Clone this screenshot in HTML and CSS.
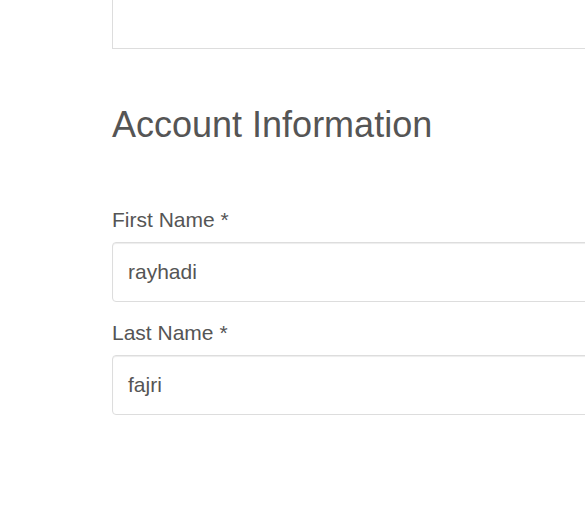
FILE: index.html
```html
<!DOCTYPE html>
<html>
<head>
<meta charset="utf-8">
<link rel="stylesheet" href="styles.css">
</head>
<body>
<div class="page">
  <div class="top-box"></div>
  <h2 class="title">Account Information</h2>
  <div class="field">
    <label class="label">First Name *</label>
    <div class="input">rayhadi</div>
  </div>
  <div class="field">
    <label class="label">Last Name *</label>
    <div class="input">fajri</div>
  </div>
</div>
</body>
</html>
```
FILE: styles.css
```css
html, body {
  margin: 0;
  padding: 0;
  background: #fff;
}
body {
  font-family: "Liberation Sans", Arial, sans-serif;
  color: #555;
  overflow: hidden;
}
.page {
  padding-left: 112px;
  overflow: hidden;
}
.top-box,
.input {
  margin-right: -10px;
}
.top-box {
  height: 48px;
  border: 1px solid #ddd;
  border-top: none;
}
.title {
  margin: 56px 0 0;
  font-size: 36px;
  line-height: 39.6px;
  font-weight: 400;
  color: #555;
}
.field {
  display: flex;
  flex-direction: column;
}
.title + .field {
  margin-top: 61px;
}
.field + .field {
  margin-top: 17px;
}
.label {
  font-size: 21px;
  line-height: 28px;
  margin-bottom: 8px;
}
.input {
  height: 58px;
  border: 1px solid #ddd;
  border-radius: 4px;
  box-shadow: inset 0 1px 1px rgba(0,0,0,0.075);
  padding: 0 15px;
  display: flex;
  align-items: center;
  font-size: 21px;
  color: #555;
}
```
